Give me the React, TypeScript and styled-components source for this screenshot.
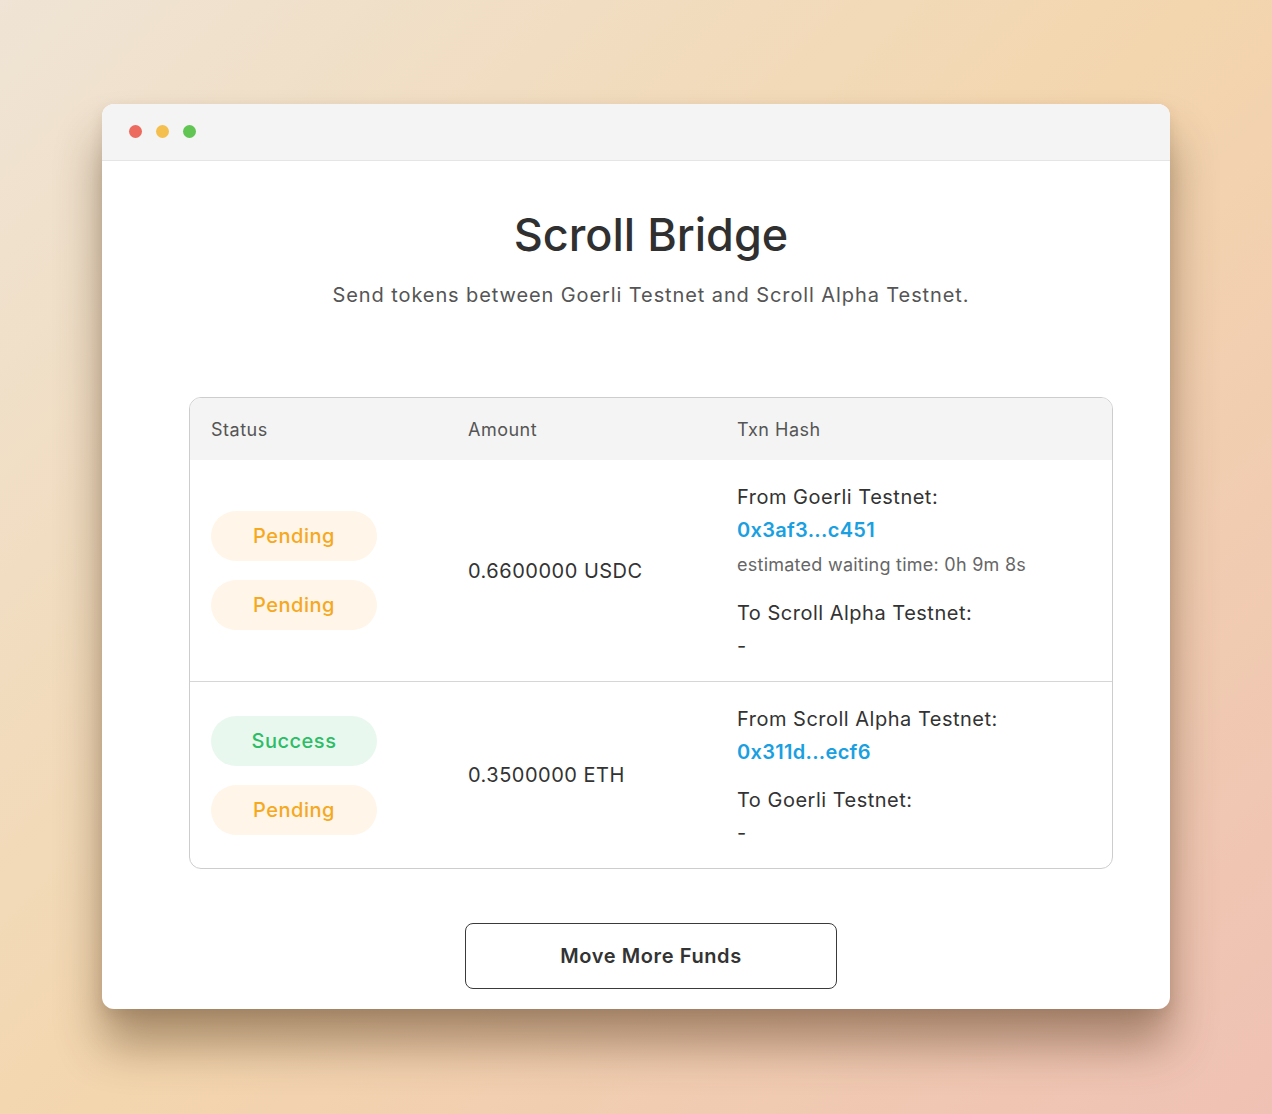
import React from "react";
import styled, { createGlobalStyle } from "styled-components";

const Global = createGlobalStyle`
  html, body { margin: 0; padding: 0; }
  body { font-family: Inter, "Noto Sans", sans-serif; }
  * { box-sizing: border-box; }
`;

const Page = styled.div`
  width: 1272px;
  height: 1114px;
  padding-top: 104px;
  display: flex;
  justify-content: center;
  align-items: flex-start;
  background: linear-gradient(135deg, #efe4d5 0%, #f3d6ae 50%, #efc1b4 100%);
  overflow: hidden;
`;

const Window = styled.div`
  width: 1068px;
  height: 905px;
  background: #fff;
  border-radius: 12px;
  overflow: hidden;
  box-shadow: 0 36px 46px rgba(80, 50, 25, 0.45), 0 6px 14px rgba(80, 50, 25, 0.12);
  display: flex;
  flex-direction: column;
`;

const TitleBar = styled.div`
  height: 57px;
  flex: none;
  background: #f4f4f4;
  border-bottom: 1px solid #e5e5e5;
  display: flex;
  align-items: center;
  gap: 14px;
  padding-left: 27px;
  padding-bottom: 1px;
`;

const Dot = styled.span<{ $c: string }>`
  width: 13px;
  height: 13px;
  border-radius: 50%;
  background: ${(p) => p.$c};
`;

const Content = styled.div`
  display: flex;
  flex-direction: column;
  align-items: center;
  padding-top: 45px;
  padding-left: 30px;
  letter-spacing: 0.5px;
`;

const Title = styled.h1`
  margin: 0;
  font-size: 45px;
  line-height: 58px;
  font-weight: 500;
  color: #303030;
  letter-spacing: 0;
`;

const Subtitle = styled.p`
  margin: 17px 0 0;
  font-size: 20px;
  line-height: 28px;
  color: #555;
  letter-spacing: 0.9px;
`;

const Table = styled.div`
  margin-top: 88px;
  width: 924px;
  border: 1px solid #cdcdcd;
  border-radius: 12px;
  overflow: hidden;
`;

const Grid = styled.div`
  display: grid;
  grid-template-columns: 257px 269px 1fr;
`;

const HeadRow = styled(Grid)`
  height: 62px;
  background: #f3f4f3;
  align-items: center;
`;

const HeadCell = styled.div`
  padding-left: 21px;
  font-size: 18px;
  color: #555;
  font-weight: 400;
`;

const Row = styled(Grid)<{ $last?: boolean }>`
  border-bottom: ${(p) => (p.$last ? "none" : "1px solid #d6d6d6")};
`;

const Cell = styled.div`
  padding-left: 21px;
  display: flex;
  flex-direction: column;
  justify-content: center;
`;

const HashCell = styled(Cell)`
  padding-top: 21px;
  padding-bottom: 18px;
`;

const Badges = styled(Cell)`
  gap: 19px;
`;

const Badge = styled.div<{ $kind: "pending" | "success" }>`
  width: 166px;
  height: 50px;
  border-radius: 25px;
  display: flex;
  align-items: center;
  justify-content: center;
  font-size: 20px;
  font-weight: 500;
  background: ${(p) => (p.$kind === "pending" ? "#fff5e8" : "#e9f8ee")};
  color: ${(p) => (p.$kind === "pending" ? "#f5a821" : "#2dbd67")};
`;

const Amount = styled(Cell)`
  font-size: 20px;
  color: #333;
`;

const Label = styled.div<{ $gap?: boolean }>`
  font-size: 20px;
  line-height: 33px;
  color: #333;
  margin-top: ${(p) => (p.$gap ? "15px" : "0")};
`;

const Hash = styled.a`
  font-size: 20px;
  line-height: 33px;
  font-weight: 600;
  color: #1aa0e1;
  text-decoration: none;
  letter-spacing: 0.3px;
`;

const Estimate = styled.div`
  font-size: 18px;
  line-height: 35px;
  color: #666;
  letter-spacing: 0.25px;
`;

const Button = styled.button`
  margin-top: 54px;
  width: 372px;
  height: 66px;
  border: 1.5px solid #3a3a3a;
  border-radius: 8px;
  background: #fff;
  font-family: Inter, "Noto Sans", sans-serif;
  font-size: 20px;
  font-weight: 600;
  letter-spacing: 0.6px;
  color: #333;
  cursor: pointer;
`;

export default function App() {
  return (
    <>
      <Global />
      <Page>
        <Window>
          <TitleBar>
            <Dot $c="#ec6a5e" />
            <Dot $c="#f4bf4f" />
            <Dot $c="#61c554" />
          </TitleBar>
          <Content>
            <Title>Scroll Bridge</Title>
            <Subtitle>Send tokens between Goerli Testnet and Scroll Alpha Testnet.</Subtitle>
            <Table>
              <HeadRow>
                <HeadCell>Status</HeadCell>
                <HeadCell>Amount</HeadCell>
                <HeadCell>Txn Hash</HeadCell>
              </HeadRow>
              <Row>
                <Badges>
                  <Badge $kind="pending">Pending</Badge>
                  <Badge $kind="pending">Pending</Badge>
                </Badges>
                <Amount>0.6600000 USDC</Amount>
                <HashCell>
                  <Label>From Goerli Testnet:</Label>
                  <Hash href="#">0x3af3...c451</Hash>
                  <Estimate>estimated waiting time: 0h 9m 8s</Estimate>
                  <Label $gap>To Scroll Alpha Testnet:</Label>
                  <Label>-</Label>
                </HashCell>
              </Row>
              <Row $last>
                <Badges>
                  <Badge $kind="success">Success</Badge>
                  <Badge $kind="pending">Pending</Badge>
                </Badges>
                <Amount>0.3500000 ETH</Amount>
                <HashCell>
                  <Label>From Scroll Alpha Testnet:</Label>
                  <Hash href="#">0x311d...ecf6</Hash>
                  <Label $gap>To Goerli Testnet:</Label>
                  <Label>-</Label>
                </HashCell>
              </Row>
            </Table>
            <Button>Move More Funds</Button>
          </Content>
        </Window>
      </Page>
    </>
  );
}
